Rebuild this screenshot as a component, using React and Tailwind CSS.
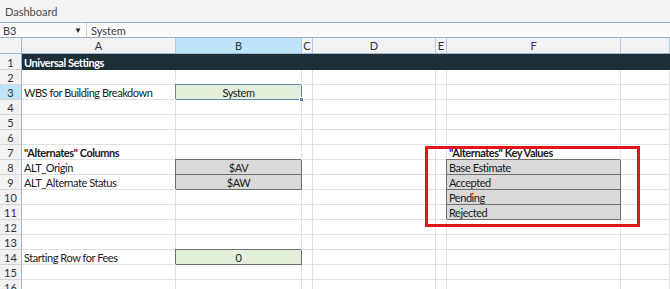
import React from 'react'

// column widths incl. the 1px gridline on the right
const COLS = [
  { key: 'A', w: 154 },
  { key: 'B', w: 126 },
  { key: 'C', w: 11 },
  { key: 'D', w: 123 },
  { key: 'E', w: 11 },
  { key: 'F', w: 174 },
  { key: 'G', w: 0 },
]

const GREEN = 'bg-[#e2efda]'
const GRAY = 'bg-[#d9d9d9]'

const ROWS = [
  { n: 1, h: 'h-[16px]', dark: true, cells: { A: { text: 'Universal Settings', bold: true } } },
  { n: 2, cells: {} },
  { n: 3, selected: true, cells: { A: { text: 'WBS for Building Breakdown' }, B: { text: 'System', fill: GREEN, center: true, sel: true } } },
  { n: 4, cells: {} },
  { n: 5, cells: {} },
  { n: 6, cells: {} },
  { n: 7, cells: { A: { text: '"Alternates" Columns', bold: true }, F: { text: '"Alternates" Key Values', bold: true } } },
  { n: 8, cells: { A: { text: 'ALT_Origin' }, B: { text: '$AV', fill: GRAY, center: true, box: true }, F: { text: 'Base Estimate', fill: GRAY, box: true } } },
  { n: 9, cells: { A: { text: 'ALT_Alternate Status' }, B: { text: '$AW', fill: GRAY, center: true, box: true }, F: { text: 'Accepted', fill: GRAY, box: true } } },
  { n: 10, cells: { F: { text: 'Pending', fill: GRAY, box: true } } },
  { n: 11, cells: { F: { text: 'Rejected', fill: GRAY, box: true } } },
  { n: 12, cells: {} },
  { n: 13, cells: {} },
  { n: 14, cells: { A: { text: 'Starting Row for Fees' }, B: { text: '0', fill: GREEN, center: true, box: true } } },
  { n: 15, cells: {} },
  { n: 16, cells: {} },
]

const Cell = ({ col, cell, dark }) => {
  const width = col.w ? { width: col.w } : null
  let cls = 'shrink-0 h-full flex items-center whitespace-nowrap overflow-visible px-[2px] pt-[1px] '
  if (!col.w) cls += 'flex-1 '
  if (dark) {
    cls += 'bg-[#1f2f38] text-white border-b border-b-[#1f2f38] '
  } else if (cell && cell.sel) {
    cls += cell.fill + ' relative z-10 border-r border-b border-[#6686ad] shadow-[-1px_-1px_0_0_#6686ad] '
  } else if (cell && cell.box) {
    cls += cell.fill + ' relative border-r border-b border-[#6f6f6f] shadow-[-1px_-1px_0_0_#6f6f6f] '
  } else {
    cls += 'border-r border-b border-[#e1e1e1] '
  }
  if (cell && cell.center) cls += 'justify-center '
  if (cell && cell.bold) cls += 'font-bold '
  return (
    <div className={cls} style={width}>
      {cell && cell.text}
      {cell && cell.sel && (
        <span className="absolute -right-[3px] -bottom-[3px] w-[5px] h-[5px] bg-[#6686ad] border border-white"></span>
      )}
    </div>
  )
}

const App = () => {
  return (
    <div className="w-[670px] h-[289px] overflow-hidden bg-white text-[#1a1a1a] text-[11px] tracking-[-0.45px] leading-none font-['Lato','Liberation_Sans',sans-serif]">
      {/* title bar */}
      <div className="h-[23px] bg-[#f3f3f5] border-b border-[#98afc9] flex items-center pl-[5px] text-[#4a4a4a] tracking-normal">
        Dashboard
      </div>

      {/* formula bar */}
      <div className="h-[15px] flex items-center bg-[#fafafa] border-b border-[#98afc9] text-[#3a3a3a] tracking-normal">
        <div className="w-[87px] h-full flex items-center justify-between pl-[3px] pr-[4px] border-r border-[#c9d3df]">
          <span>B3</span>
          <span className="text-[8px] text-[#222]">▼</span>
        </div>
        <div className="pl-[4px]">System</div>
      </div>

      <div className="relative">
        {/* column header */}
        <div className="h-[16px] flex bg-[#f2f2f2] border-b border-[#9fb5cd] text-[#333] tracking-normal">
          <div className="w-[22px] shrink-0 border-r border-[#9fb5cd]"></div>
          {COLS.map((c) => (
            <div
              key={c.key}
              className={
                'h-full flex items-center justify-center border-r border-[#b8c7d9] ' +
                (c.w ? 'shrink-0 ' : 'flex-1 ') +
                (c.key === 'B' ? 'bg-[#bde4f8]' : '')
              }
              style={c.w ? { width: c.w } : null}
            >
              {c.key === 'G' ? '' : c.key}
            </div>
          ))}
        </div>

        {/* rows */}
        {ROWS.map((r) => (
          <div key={r.n} className={'flex ' + (r.h || 'h-[15px]')}>
            <div
              className={
                'w-[22px] shrink-0 h-full flex items-center justify-center pt-[1px] border-r border-r-[#9fb5cd] border-b border-b-[#d5d5d5] text-[#333] tracking-normal ' +
                (r.selected ? 'bg-[#bde4f8]' : 'bg-[#f2f2f2]')
              }
            >
              {r.n}
            </div>
            {COLS.map((c) => (
              <Cell key={c.key} col={c} cell={r.cells[c.key]} dark={r.dark} />
            ))}
          </div>
        ))}

        {/* red highlight */}
        <div className="absolute left-[425px] top-[108px] w-[215px] h-[81px] border-[3px] border-[#e5141b] pointer-events-none"></div>
      </div>
    </div>
  )
}

export default App
